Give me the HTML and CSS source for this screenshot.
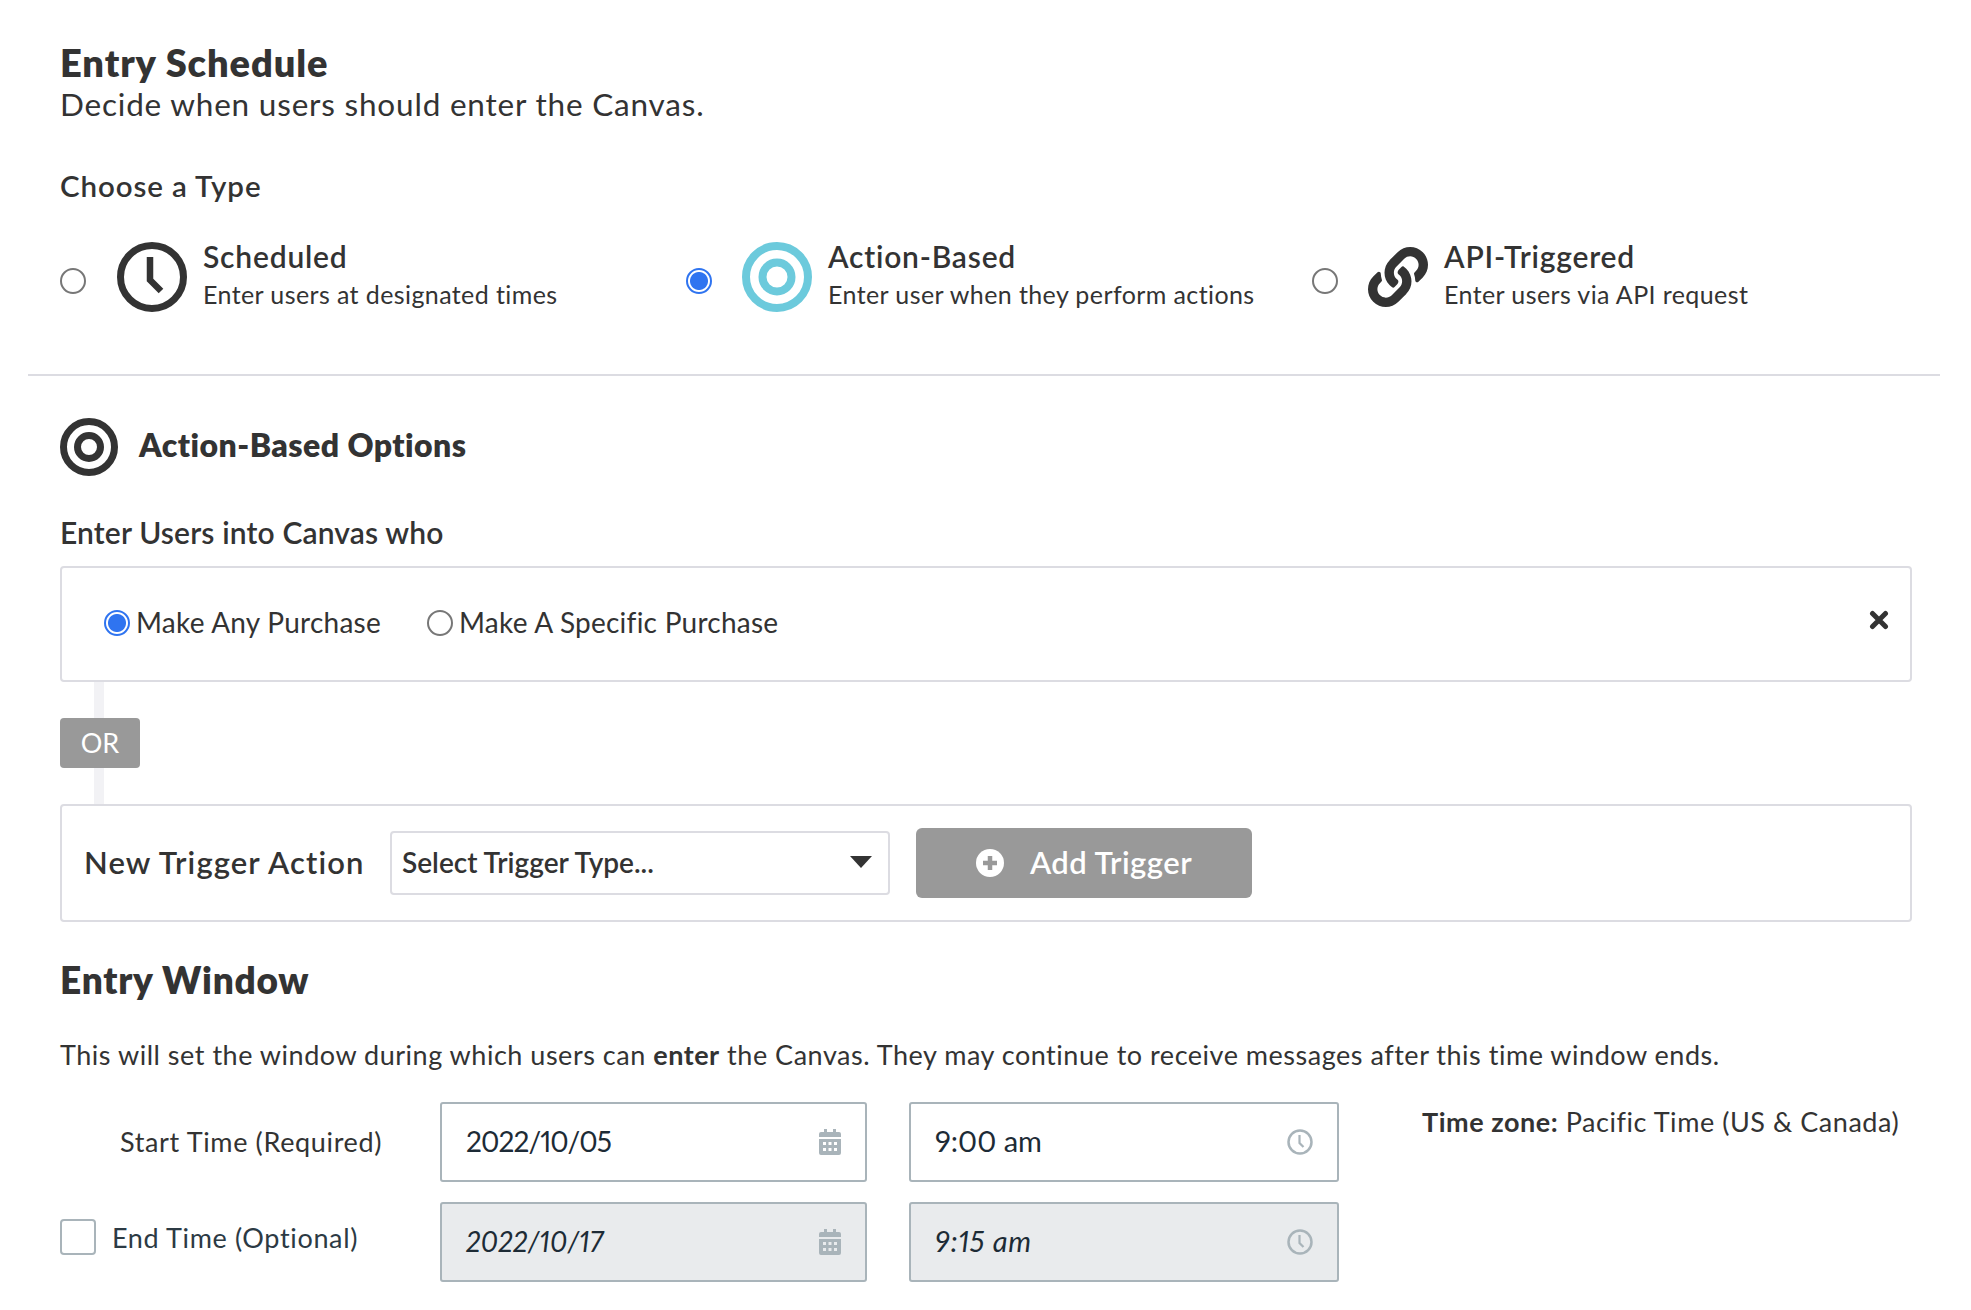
FILE: index.html
```html
<!DOCTYPE html>
<html lang="en">

<head>
    <meta charset="UTF-8">
    <meta name="viewport" content="width=device-width, initial-scale=1.0">
    <title>Entry Schedule</title>
    <link rel="stylesheet" href="styles.css">
</head>

<body>
    <div class="page">
        <h1>Entry Schedule</h1>
        <p class="lead">Decide when users should enter the Canvas.</p>

        <p class="field-title choose-title">Choose a Type</p>
        <div class="type-row">
            <label class="type-option">
                <input class="radio type-radio" type="radio" name="type">
                <svg class="type-icon" viewBox="0 0 70 70">
                    <circle cx="35" cy="35" r="31.5" fill="none" stroke="#333" stroke-width="7" />
                    <path d="M33 15v23l11 11" fill="none" stroke="#333" stroke-width="6.5" />
                </svg>
                <span class="type-text">
                    <span class="type-name">Scheduled</span>
                    <span class="type-desc">Enter users at designated times</span>
                </span>
            </label>
            <label class="type-option">
                <input class="radio type-radio" type="radio" name="type" checked>
                <svg class="type-icon" viewBox="0 0 70 70">
                    <circle cx="35" cy="35" r="31" fill="none" stroke="#6ccadc" stroke-width="8" />
                    <circle cx="35" cy="35" r="14.5" fill="none" stroke="#6ccadc" stroke-width="8" />
                </svg>
                <span class="type-text">
                    <span class="type-name">Action-Based</span>
                    <span class="type-desc">Enter user when they perform actions</span>
                </span>
            </label>
            <label class="type-option">
                <input class="radio type-radio" type="radio" name="type">
                <svg class="type-icon link-icon" viewBox="0 0 512 512">
                    <path fill="#333" d="M326.612 185.391c59.747 59.809 58.927 155.698.36 214.59-.11.12-.24.25-.36.37l-67.2 67.2c-59.27 59.27-155.699 59.262-214.96 0-59.27-59.26-59.27-155.7 0-214.96l37.106-37.106c9.84-9.84 26.786-3.3 27.294 10.606.648 17.722 3.826 35.527 9.69 52.721 1.986 5.822.567 12.262-3.783 16.612l-13.087 13.087c-28.026 28.026-28.905 73.66-1.155 101.96 28.024 28.579 74.086 28.749 102.325.51l67.2-67.19c28.191-28.191 28.073-73.757 0-101.83-3.701-3.694-7.429-6.564-10.341-8.569a16.037 16.037 0 0 1-6.947-12.606c-.396-10.567 3.348-21.456 11.698-29.806l21.054-21.055c5.521-5.521 14.182-6.199 20.584-1.731a152.482 152.482 0 0 1 20.522 17.197zM467.547 44.449c-59.261-59.262-155.69-59.27-214.96 0l-67.2 67.2c-.12.12-.25.25-.36.37-58.566 58.892-59.387 154.781.36 214.59a152.454 152.454 0 0 0 20.521 17.196c6.402 4.468 15.064 3.789 20.584-1.731l21.054-21.055c8.35-8.35 12.094-19.239 11.698-29.806a16.037 16.037 0 0 0-6.947-12.606c-2.912-2.005-6.64-4.875-10.341-8.569-28.073-28.073-28.191-73.639 0-101.83l67.2-67.19c28.239-28.239 74.3-28.069 102.325.51 27.75 28.3 26.872 73.934-1.155 101.96l-13.087 13.087c-4.35 4.35-5.769 10.79-3.783 16.612 5.864 17.194 9.042 34.999 9.69 52.721.509 13.906 17.454 20.446 27.294 10.606l37.106-37.106c59.271-59.259 59.271-155.699.001-214.959z" />
                </svg>
                <span class="type-text">
                    <span class="type-name">API-Triggered</span>
                    <span class="type-desc">Enter users via API request</span>
                </span>
            </label>
        </div>

        <hr class="divider">

        <div class="options-head">
            <svg class="options-icon" viewBox="0 0 58 58">
                <circle cx="29" cy="29" r="25.5" fill="none" stroke="#333" stroke-width="7" />
                <circle cx="29" cy="29" r="11.5" fill="none" stroke="#333" stroke-width="7" />
            </svg>
            <h2 class="options-title">Action-Based Options</h2>
        </div>

        <p class="field-title users-title">Enter Users into Canvas who</p>
        <div class="box purchase-box">
            <label class="purchase-option">
                <input class="radio" type="radio" name="purchase" checked>
                <span>Make Any Purchase</span>
            </label>
            <label class="purchase-option">
                <input class="radio" type="radio" name="purchase">
                <span>Make A Specific Purchase</span>
            </label>
            <svg class="close-icon" viewBox="0 0 20 20">
                <path d="M3.5 3.5l13 13M16.500 3.500l-13 13" stroke="#333" stroke-width="5" stroke-linecap="round" />
            </svg>
        </div>

        <div class="or-link"><span class="or-badge">OR</span></div>

        <div class="box trigger-box">
            <span class="trigger-label">New Trigger Action</span>
            <div class="trigger-select">
                <span>Select Trigger Type...</span>
                <span class="caret"></span>
            </div>
            <button class="add-button" type="button">
                <svg class="plus-icon" viewBox="0 0 28 28">
                    <circle cx="14" cy="14" r="14" fill="#fff" />
                    <path d="M14 7v14M7 14h14" stroke="#999" stroke-width="4.500" />
                </svg>
                <span class="add-text">Add Trigger</span>
            </button>
        </div>

        <h2 class="window-title">Entry Window</h2>
        <p class="window-note">This will set the window during which users can <b>enter</b> the Canvas. They may continue to receive messages after this time window ends.</p>

        <div class="time-grid">
            <span class="time-label start-label"><span>Start Time (Required)</span></span>
            <div class="time-field">
                <span class="date-value">2022/10/05</span>
                <svg class="cal-icon" viewBox="0 0 22 26">
                    <use href="#cal" />
                </svg>
            </div>
            <div class="time-field">
                <span>9:00 am</span>
                <svg class="clock-icon" viewBox="0 0 26 26">
                    <use href="#clk" />
                </svg>
            </div>
            <p class="time-zone"><b>Time zone:</b> Pacific Time (US &amp; Canada)</p>

            <label class="time-label end-label">
                <input class="checkbox" type="checkbox">
                <span>End Time (Optional)</span>
            </label>
            <div class="time-field disabled">
                <span class="date-value">2022/10/17</span>
                <svg class="cal-icon" viewBox="0 0 22 26">
                    <use href="#cal" />
                </svg>
            </div>
            <div class="time-field disabled">
                <span>9:15 am</span>
                <svg class="clock-icon" viewBox="0 0 26 26">
                    <use href="#clk" />
                </svg>
            </div>
        </div>
    </div>

    <svg class="icon-defs" width="0" height="0">
        <symbol id="cal" viewBox="0 0 22 26">
            <path fill="#a9b4ba" fill-rule="evenodd" d="M5 0h3v3h6V0h3v3h3a2 2 0 0 1 2 2v3H0V5a2 2 0 0 1 2-2h3zM0 10h22v14a2 2 0 0 1-2 2H2a2 2 0 0 1-2-2zM4 13v3h3v-3zM9.500 13v3h3v-3zM15 13v3h3v-3zM4 19v3h3v-3zM9.500 19v3h3v-3zM15 19v3h3v-3z" />
        </symbol>
        <symbol id="clk" viewBox="0 0 26 26">
            <circle cx="13" cy="13" r="11.500" fill="none" stroke="#a9b4ba" stroke-width="2.500" />
            <path d="M12.500 6v8l4 4" fill="none" stroke="#a9b4ba" stroke-width="2.200" />
        </symbol>
    </svg>
</body>

</html>
```

FILE: styles.css
```css
body {
    margin: 0;
    background: #fff;
    color: #333;
    font-family: 'Lato', 'Noto Sans', Arial, sans-serif;
}

p,
h1,
h2 {
    margin: 0;
}

.page {
    padding: 39px 59px 28px 60px;
}

h1 {
    font-size: 38px;
    line-height: 46px;
    font-weight: 800;
    letter-spacing: 0.9px;
}

.lead {
    font-size: 31.5px;
    line-height: 38px;
    letter-spacing: 0.8px;
}

.field-title {
    font-size: 29.5px;
    line-height: 38px;
    font-weight: 600;
    letter-spacing: 0.9px;
}

.choose-title {
    margin-top: 44px;
}

/* type picker */
.type-row {
    display: grid;
    grid-template-columns: 626px 626px 1fr;
    margin-top: 35px;
}

.type-option {
    display: flex;
    align-items: center;
    height: 74px;
}

.radio {
    appearance: none;
    box-sizing: border-box;
    flex: none;
    width: 26px;
    height: 26px;
    margin: 0;
    border: 2px solid #777;
    border-radius: 50%;
    background: #fff;
}

.radio:checked {
    border-color: #2f74f0;
    background: radial-gradient(circle, #2f74f0 0 8.5px, #fff 9.5px);
}

.type-radio {
    margin-top: 8px;
}

.type-icon {
    flex: none;
    width: 70px;
    height: 70px;
    margin-left: 30px;
}

.type-option:first-child .type-icon {
    margin-left: 31px;
}

.link-icon {
    width: 60px;
    height: 62px;
}

.type-text {
    display: flex;
    flex-direction: column;
    margin: -4px 0 0 16px;
}

.type-name {
    font-size: 30px;
    line-height: 37px;
    font-weight: 600;
    letter-spacing: 0.8px;
}

.type-desc {
    padding-top: 1px;
    font-size: 25px;
    line-height: 37px;
    letter-spacing: 0.4px;
}

.divider {
    height: 2px;
    margin: 60px -28px 0 -32px;
    border: 0;
    background: #dcdce2;
}

/* action based options */
.options-head {
    display: flex;
    align-items: center;
    gap: 21px;
    margin-top: 42px;
}

.options-icon {
    width: 58px;
    height: 58px;
}

.options-title {
    padding-bottom: 5px;
    font-size: 32px;
    line-height: 40px;
    font-weight: 800;
    letter-spacing: 0.45px;
}

.users-title {
    margin-top: 37px;
    font-size: 30px;
    letter-spacing: 0.15px;
}

.box {
    display: flex;
    align-items: center;
    box-sizing: border-box;
    border: 2px solid #dcdce2;
    border-radius: 4px;
}

.purchase-box {
    height: 116px;
    margin-top: 15px;
    padding: 0 21px 2px 42px;
}

.purchase-option {
    display: flex;
    align-items: center;
    gap: 6px;
    margin-right: 46px;
    font-size: 28px;
    letter-spacing: 0.25px;
}

.purchase-option span {
    padding-bottom: 3px;
}

.close-icon {
    width: 20px;
    height: 20px;
    margin: -6px 0 0 auto;
}

.or-link {
    display: flex;
    height: 122px;
    box-sizing: border-box;
    padding-top: 36px;
    background: linear-gradient(#f2f2f5, #f2f2f5) no-repeat 34px 0 / 10px 100%;
}

.or-badge {
    width: 80px;
    height: 50px;
    border-radius: 4px;
    background: #999;
    color: #fff;
    font-size: 27px;
    line-height: 50px;
    text-align: center;
}

.trigger-box {
    height: 118px;
    padding-left: 22px;
}

.trigger-label {
    width: 306px;
    padding-bottom: 2px;
    font-size: 31px;
    font-weight: 600;
    letter-spacing: 1.1px;
}

.trigger-select {
    display: flex;
    align-items: center;
    justify-content: space-between;
    box-sizing: border-box;
    width: 500px;
    height: 64px;
    padding: 0 16px 2px 10px;
    border: 2px solid #dcdce2;
    border-radius: 4px;
    font-size: 28px;
    font-weight: 600;
}

.caret {
    width: 0;
    height: 0;
    border-top: 12px solid #333;
    border-left: 11px solid transparent;
    border-right: 11px solid transparent;
}

.add-button {
    display: flex;
    align-items: center;
    justify-content: center;
    gap: 26px;
    width: 336px;
    height: 70px;
    margin-left: 26px;
    border: 0;
    border-radius: 6px;
    background: #999;
    color: #fff;
    font-family: inherit;
    font-size: 31px;
    font-weight: 600;
    letter-spacing: 0.45px;
}

.add-text {
    padding-bottom: 2px;
}

.plus-icon {
    width: 28px;
    height: 28px;
}

/* entry window */
.window-title {
    margin-top: 36px;
    font-size: 37px;
    line-height: 44px;
    font-weight: 800;
    letter-spacing: 0.75px;
}

.window-note {
    margin-top: 35px;
    font-size: 27px;
    line-height: 36px;
    letter-spacing: 0.52px;
}

.window-note b,
.time-zone b {
    font-weight: 700;
}

.time-grid {
    display: grid;
    grid-template-columns: 338px 427px 430px 1fr;
    grid-auto-rows: 80px;
    gap: 20px 42px;
    margin-top: 29px;
}

.time-label {
    display: flex;
    align-items: center;
    gap: 16px;
    font-size: 27px;
    letter-spacing: 0.65px;
}

.start-label {
    padding-left: 60px;
}

.start-label span {
    padding-bottom: 2px;
}

.end-label {
    color: #2c3a44;
}

.end-label span {
    padding-bottom: 10px;
}

.checkbox {
    appearance: none;
    box-sizing: border-box;
    flex: none;
    width: 36px;
    height: 36px;
    margin: -11px 0 0;
    border: 2px solid #a9b4ba;
    border-radius: 4px;
    background: #fff;
}

.time-field {
    display: flex;
    align-items: center;
    justify-content: space-between;
    box-sizing: border-box;
    padding: 0 24px 0 24px;
    border: 2px solid #a9b4ba;
    border-radius: 3px;
    color: #1d2b36;
    font-size: 29px;
    font-variant-numeric: proportional-nums;
}

.time-field span {
    padding-bottom: 4px;
}

.time-field .date-value {
    padding-bottom: 3px;
    font-size: 28px;
    letter-spacing: -0.9px;
}

.time-field.disabled {
    background: #e9ebed;
    font-style: italic;
    letter-spacing: 0.7px;
}

.time-field.disabled .date-value {
    letter-spacing: 0.1px;
}

.cal-icon {
    width: 22px;
    height: 26px;
}

.clock-icon {
    width: 26px;
    height: 26px;
}

.time-zone {
    margin-top: 1px;
    padding-left: 41px;
    font-size: 27px;
    line-height: 38px;
    letter-spacing: 0.55px;
}

.icon-defs {
    position: absolute;
}
```
